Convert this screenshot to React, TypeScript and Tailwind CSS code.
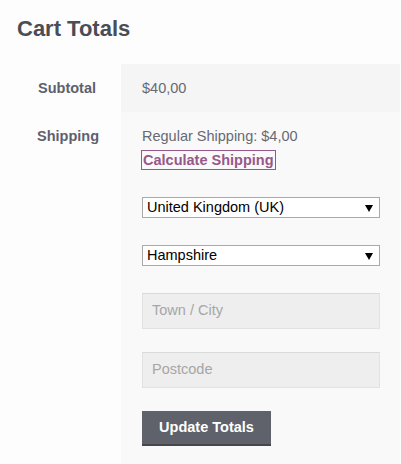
const font = { fontFamily: '"Liberation Sans", Arial, sans-serif' };

function FakeSelect({ value }: { value: string }) {
  return (
    <div className="flex h-[21px] w-[238px] items-center justify-between border border-[#a9a9a9] bg-white pl-[4px] pr-[6px] text-[14.5px] leading-none text-black">
      <span>{value}</span>
      <svg width="8" height="7" viewBox="0 0 8 7" className="mt-[1px]">
        <path d="M0 0h8L4 7z" fill="#000" />
      </svg>
    </div>
  );
}

function FakeInput({ placeholder }: { placeholder: string }) {
  return (
    <div className="flex h-[36px] w-[238px] items-center border border-[#e2e2e2] border-t-[#d9d9d9] bg-[#eeeeee] pl-[9px] text-[14.5px] text-[#a6a6a6]">
      {placeholder}
    </div>
  );
}

export default function App() {
  return (
    <div className="h-[464px] w-[401px] overflow-hidden bg-[#fdfdfd]" style={font}>
      <h2 className="pl-[17px] pt-[16px] text-[22px] font-bold leading-[26px] text-[#4a4d56]">
        Cart Totals
      </h2>

      <div className="mt-[22px] flex flex-col">
        {/* Subtotal */}
        <div className="flex h-[48px]">
          <div className="flex w-[121px] items-center pl-[38px] pt-[2px] text-[14.5px] font-bold text-[#5e616c]">
            Subtotal
          </div>
          <div className="flex w-[279px] items-center bg-[#f5f5f5] pl-[21px] pt-[2px] text-[14.5px] text-[#676a74]">
            $40,00
          </div>
        </div>

        {/* Shipping */}
        <div className="flex h-[352px]">
          <div className="w-[121px] pl-[37px] pt-[14px] text-[14.5px] font-bold leading-[20px] text-[#5e616c]">
            Shipping
          </div>
          <div className="flex w-[279px] flex-col items-start bg-[#f9f9f9] pl-[21px] pt-[14px]">
            <p className="text-[14.5px] leading-[20px] text-[#676a74]">Regular Shipping: $4,00</p>
            <span className="mt-[4px] -ml-[1px] border border-[#96588a] px-[1px] text-[14.5px] font-bold leading-[18px] text-[#96588a]">
              Calculate Shipping
            </span>
            <div className="mt-[27px]">
              <FakeSelect value="United Kingdom (UK)" />
            </div>
            <div className="mt-[27px]">
              <FakeSelect value="Hampshire" />
            </div>
            <div className="mt-[27px]">
              <FakeInput placeholder="Town / City" />
            </div>
            <div className="mt-[23px]">
              <FakeInput placeholder="Postcode" />
            </div>
            <button className="mt-[23px] h-[35px] w-[129px] border-b-2 border-[#45474d] bg-[#5f626b] text-[14.5px] font-bold text-white">
              Update Totals
            </button>
          </div>
        </div>
      </div>
    </div>
  );
}
